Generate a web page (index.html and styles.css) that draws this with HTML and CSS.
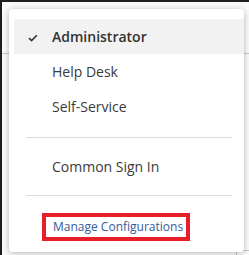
FILE: index.html
```html
<!DOCTYPE html>
<html lang="en">
<head>
  <meta charset="UTF-8">
  <meta name="viewport" content="width=device-width, initial-scale=1.0">
  <title>Role Menu</title>
  <link rel="stylesheet" href="styles.css">
</head>
<body>
  <div class="app">
    <!-- Page behind the menu -->
    <div class="app-header"></div>
    <div class="app-body">
      <div class="panel"></div>
    </div>

    <!-- Role dropdown -->
    <div class="role-menu">
      <div class="role-item active">
        <svg class="check" width="10" height="8" viewBox="0 0 10 8">
          <path d="M1 4.2 L3.6 6.6 L8.8 1.2" fill="none" stroke="#333" stroke-width="1.6"/>
        </svg>
        Administrator
      </div>
      <div class="role-item">Help Desk</div>
      <div class="role-item">Self-Service</div>
      <div class="divider first"></div>
      <div class="role-item">Common Sign In</div>
      <div class="divider second"></div>
      <a class="manage-link" href="#">Manage Configurations</a>
    </div>
  </div>
</body>
</html>
```
FILE: styles.css
```css
body, html {
  margin: 0;
  padding: 0;
  width: 100%;
  height: 100%;
  font-family: "Open Sans", "Noto Sans", sans-serif;
  background: #fff;
}

/* Page behind */
.app {
  position: relative;
  height: 100%;
  box-sizing: border-box;
  border-top: 2px solid #1e1e1e;
  border-left: 2px solid #1e1e1e;
  background: #fafafa;
  overflow: hidden;
}

.app-header {
  height: 51px;
  border-bottom: 1px solid #c8c8c8;
  background: #fafafa;
}

.app-body {
  display: flex;
  justify-content: flex-end;
  padding-top: 196px;
}

.panel {
  width: 12px;
  height: 10px;
  border-left: 1px solid #c8c8c8;
  border-top: 1px solid #c8c8c8;
}

/* Dropdown */
.role-menu {
  position: absolute;
  top: 7px;
  left: 7px;
  width: 235px;
  box-sizing: border-box;
  padding: 10px 0 11px 5px;
  background: #fff;
  border-radius: 4px;
  box-shadow: 0 1px 6px rgba(0, 0, 0, 0.28);
}

.role-item {
  position: relative;
  height: 35px;
  line-height: 35px;
  padding-left: 38px;
  font-size: 14px;
  color: #3a3a3a;
}

.role-item.active {
  background: #f2f2f2;
  font-weight: 600;
  color: #333;
}

.check {
  position: absolute;
  left: 14px;
  top: 15px;
}

.divider {
  height: 1px;
  background: #dcdcdc;
  margin: 0 12px;
}

.divider.first {
  margin-top: 13px;
  margin-bottom: 11px;
}

.divider.second {
  margin-top: 11px;
  margin-bottom: 17px;
}

.manage-link {
  display: block;
  width: 148px;
  height: 28px;
  box-sizing: border-box;
  margin-left: 28px;
  padding-left: 7px;
  border: 4px solid #e81f2b;
  font-size: 12px;
  line-height: 20px;
  color: #34599b;
  text-decoration: none;
  white-space: nowrap;
}
```
